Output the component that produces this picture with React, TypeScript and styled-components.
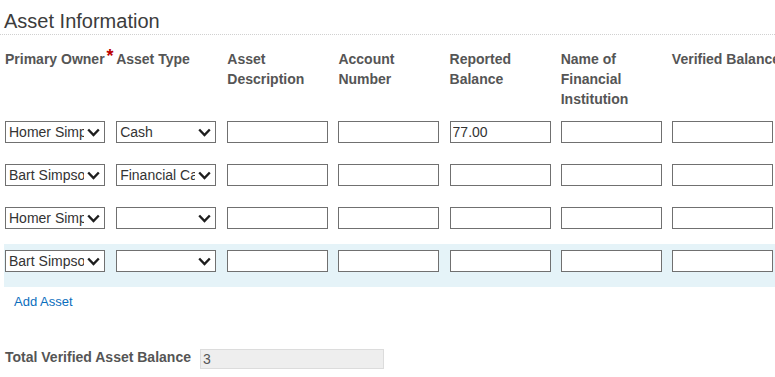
import React from 'react'
import styled, { createGlobalStyle } from 'styled-components';

const GlobalStyle = createGlobalStyle`
  body {
    margin: 0;
    background: #fff;
    font-family: "Liberation Sans", Arial, sans-serif;
    color: #333;
  }
`

const Page = styled.div`
  width: 775px;
  overflow: hidden;
`

const Title = styled.h2`
  margin: 0;
  padding: 10px 0 2px 4px;
  font-size: 20px;
  line-height: 22px;
  font-weight: normal;
  color: #3c3c3c;
  border-bottom: 1px dotted #d0d0d0;
`

const Grid = styled.div`
  display: grid;
  grid-template-columns: repeat(7, 111.15px);
`

const HeaderRow = styled(Grid)`
  margin-top: 14px;
  padding: 0 0 6px 5px;
`

const HeaderCell = styled.div`
  font-size: 14px;
  line-height: 20px;
  font-weight: bold;
  color: #555;
  white-space: normal;
`

const NoWrap = styled(HeaderCell)`
  white-space: nowrap;
`

const Req = styled.span`
  color: #b00;
  font-size: 18px;
  line-height: 14px;
  vertical-align: top;
  margin-left: 2px;
`

const Row = styled(Grid)<{ $highlight?: boolean }>`
  margin-left: 4px;
  padding: 6px 0 15px 1px;
  width: 770px;
  background: ${p => (p.$highlight ? '#e5f3f8' : 'transparent')};
`

const SelectWrap = styled.div`
  position: relative;
  width: 100px;
  height: 22px;
`

const Select = styled.select`
  appearance: none;
  -webkit-appearance: none;
  box-sizing: border-box;
  width: 100px;
  height: 22px;
  margin: 0;
  padding: 0 20px 0 3px;
  border: 1px solid #707070;
  border-radius: 0;
  background: #fff;
  font-family: "Liberation Sans", Arial, sans-serif;
  font-size: 14px;
  color: #333;
  outline: none;
`

const Chevron = styled.svg`
  position: absolute;
  right: 5px;
  top: 7px;
  pointer-events: none;
`

const TextBox = styled.input`
  box-sizing: border-box;
  width: 101px;
  height: 22px;
  margin: 0;
  padding: 0 2px;
  border: 1px solid #707070;
  border-radius: 0;
  background: #fff;
  font-family: "Liberation Sans", Arial, sans-serif;
  font-size: 14px;
  color: #333;
  outline: none;
`

const AddLink = styled.a`
  display: block;
  margin: 7px 0 0 14px;
  font-size: 13px;
  line-height: 16px;
  color: #0a6ebd;
  text-decoration: none;
  cursor: pointer;
`

const TotalRow = styled.div`
  display: flex;
  align-items: flex-start;
  gap: 9px;
  margin-top: 37px;
  padding-left: 5px;
`

const TotalLabel = styled.label`
  font-size: 14px;
  line-height: 20px;
  font-weight: bold;
  color: #555;
`

const TotalField = styled.input`
  box-sizing: border-box;
  width: 184px;
  height: 20px;
  margin: 2px 0 0;
  padding: 0 2px;
  border: 1px solid #dcdcdc;
  border-radius: 0;
  background: #eee;
  font-family: "Liberation Sans", Arial, sans-serif;
  font-size: 14px;
  color: #555;
  outline: none;
`

type Asset = {
  owner: string
  type: string
  reported: string
}

const owners = ['Homer Simpson', 'Bart Simpson', 'Marge Simpson']
const types = ['', 'Cash', 'Financial Catalog', 'Real Estate']

const assets: Asset[] = [
  { owner: 'Homer Simpson', type: 'Cash', reported: '77.00' },
  { owner: 'Bart Simpson', type: 'Financial Catalog', reported: '' },
  { owner: 'Homer Simpson', type: '', reported: '' },
  { owner: 'Bart Simpson', type: '', reported: '' },
]

function Dropdown({ value, options }: { value: string, options: string[] }) {
  return (
    <SelectWrap>
      <Select defaultValue={value}>
        {options.map(o => <option key={o} value={o}>{o}</option>)}
      </Select>
      <Chevron width="13" height="9" viewBox="0 0 13 9">
        <polyline points="1.2,1.5 6.5,7 11.8,1.5" fill="none" stroke="#1e1e1e" strokeWidth="2.4" />
      </Chevron>
    </SelectWrap>
  )
}

function App() {
  return (
    <Page>
      <GlobalStyle />
      <Title>Asset Information</Title>
      <HeaderRow>
        <NoWrap>Primary Owner<Req>*</Req></NoWrap>
        <HeaderCell>Asset Type</HeaderCell>
        <HeaderCell>Asset Description</HeaderCell>
        <HeaderCell>Account Number</HeaderCell>
        <HeaderCell>Reported Balance</HeaderCell>
        <HeaderCell>Name of Financial Institution</HeaderCell>
        <NoWrap>Verified Balance</NoWrap>
      </HeaderRow>
      {assets.map((a, i) => (
        <Row key={i} $highlight={i === assets.length - 1}>
          <Dropdown value={a.owner} options={owners} />
          <Dropdown value={a.type} options={types} />
          <TextBox />
          <TextBox />
          <TextBox defaultValue={a.reported} />
          <TextBox />
          <TextBox />
        </Row>
      ))}
      <AddLink>Add Asset</AddLink>
      <TotalRow>
        <TotalLabel>Total Verified Asset Balance</TotalLabel>
        <TotalField value="3" readOnly />
      </TotalRow>
    </Page>
  )
}

export default App
